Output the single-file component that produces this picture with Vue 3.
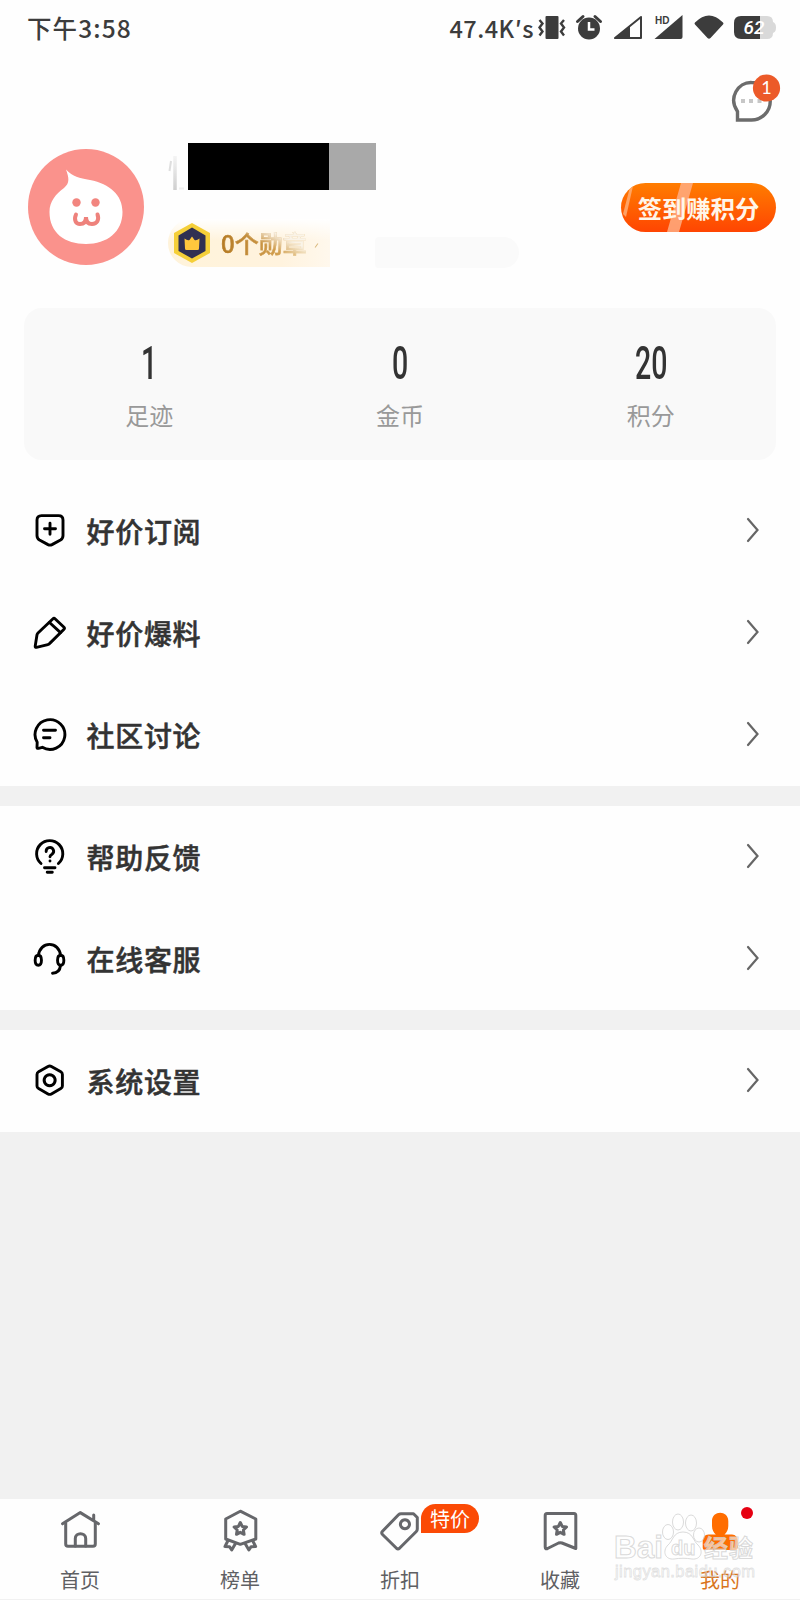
<template>
  <div class="page">
    <header class="top">
      <div class="status-bar">
        <span class="time">下午3:58</span>
        <div class="status-right">
          <span class="speed">47.4K′s</span>
          <svg width="242" height="28" viewBox="0 0 242 28" fill="#3c3c3c">
            <rect x="7.500" y="2" width="13" height="23" rx="1" />
            <path d="M1.500 6l3 3.500-3 4 3 4-3 4M26 6l-3 3.500 3 4-3 4 3 4" fill="none" stroke="#3c3c3c" stroke-width="2.400" />
            <circle cx="51" cy="14.500" r="11" />
            <path d="M39.500 7.500L45 2.500M62.500 7.500L57 2.500" stroke="#3c3c3c" stroke-width="3" stroke-linecap="round" />
            <path d="M51 8v7.500h5.500" fill="none" stroke="#fff" stroke-width="2.500" />
            <path d="M77 24L103 3V24Z" fill="none" stroke="#3c3c3c" stroke-width="2" stroke-linejoin="round" />
            <path d="M76 25L92 12V25Z" />
            <path d="M116.500 25L144.500 1V23q0 2-2 2Z" />
            <text x="117" y="9.500" class="hd">HD</text>
            <path d="M157 8.500q14-14 28 0q1 1 0 2L172.500 24q-1.500 1.500-3 0L157 10.500q-1-1 0-2Z" />
            <path d="M203 2h19v23h-19q-7 0-7-7V9q0-7 7-7Z" />
            <path d="M222 2h7q6 0 6 6q3 1 3 5.500t-3 5.500q0 6-6 6h-7Z" fill="#d9d9d9" />
            <text x="205.500" y="20" class="battery">62</text>
          </svg>
        </div>
      </div>

      <div class="message-row">
        <svg width="56" height="56" viewBox="0 0 56 56">
          <path d="M7.500 48V39.500C-2 26 8 10 21.500 10.500A18.700 18.700 0 0 1 21.500 48Z" fill="#fff" stroke="#6c6c6c" stroke-width="3.400" />
          <path d="M11 27h4v4h-4zM19 27h4v4h-4zM27.500 27h4v4h-4z" fill="#c7c7c7" />
          <circle cx="36.500" cy="16" r="13.600" fill="#ec5a29" />
          <text x="36.500" y="22" class="count">1</text>
        </svg>
      </div>

      <div class="profile">
        <svg class="avatar" width="116" height="116" viewBox="0 0 116 116">
          <circle cx="58" cy="58" r="58" fill="#fa928c" />
          <path d="M38 20.500C45 28 51 29 62 31C82 35 94.500 46 94.500 63C94.500 83 79 95 58 95C37 95 21.500 84 21.500 63C21.500 52 28 45 36 39C42 34 41 29 38 20.500Z" fill="#fff" />
          <circle cx="48.500" cy="53.500" r="4.200" fill="#f2857f" />
          <circle cx="67.500" cy="53.500" r="4.200" fill="#f2857f" />
          <path d="M48 65.500C45.500 71 48 75 52 75C56 75 58 73 58 68C58 73 60 75 64 75C69 75 71.500 71 69.500 65.500" fill="none" stroke="#ee827c" stroke-width="4" stroke-linecap="round" />
        </svg>
        <div class="profile-info">
          <div class="name">
            <svg width="20" height="48" viewBox="0 0 20 48">
              <path d="M3 18L1.500 28" stroke="#dedede" stroke-width="2" />
              <path d="M7 13V47" stroke="url(#strokeFade)" stroke-width="3.500" />
              <path d="M11 45.500h5" stroke="#efefef" stroke-width="2" />
              <defs>
                <linearGradient id="strokeFade" gradientUnits="userSpaceOnUse" x1="0" y1="13" x2="0" y2="47">
                  <stop offset="0" stop-color="#f4f4f4" />
                  <stop offset="1" stop-color="#cfcfcf" />
                </linearGradient>
              </defs>
            </svg>
            <span class="mask-dark"></span>
            <span class="mask-light"></span>
          </div>
          <div class="badges">
            <div class="medal">
              <svg width="38" height="42" viewBox="0 0 38 42">
                <path d="M19 1L37 11V31L19 41L1 31V11Z" fill="#f5cf38" />
                <path d="M19 5.500L32.500 13.500V29L19 36.500L5.500 29V13.500Z" fill="#303052" />
                <path d="M11.500 16.500Q14.500 19 16.500 18L19 14.500L21.500 18Q23.500 19 26.500 16.500L26 26.500Q26 28 24.500 28H13.500Q12 28 12 26.500Z" fill="#ffc83d" />
              </svg>
              <span class="medal-text">0个勋章</span>
              <span class="medal-arrow"></span>
            </div>
            <span class="level"></span>
          </div>
        </div>
        <button class="sign">
          <svg width="155" height="49" viewBox="0 0 155 49">
            <path d="M9 4L12 3L5 34L2 31Z" fill="#ffb27b" opacity=".8" />
            <path d="M60 0H72L58 49H46Z" fill="#ffad83" opacity=".85" />
          </svg>
          <span>签到赚积分</span>
        </button>
      </div>

      <div class="stats">
        <div v-for="item in stats" :key="item.label" class="stat">
          <span class="stat-value">{{ item.value }}</span>
          <span class="stat-label">{{ item.label }}</span>
        </div>
      </div>
    </header>

    <section v-for="(group, i) in menu" :key="i" class="group">
      <div v-for="row in group" :key="row.label" class="row">
        <svg class="row-icon" width="36" height="36" viewBox="0 0 36 36">
          <path v-for="d in row.paths" :key="d" :d="d" />
        </svg>
        <span class="row-label">{{ row.label }}</span>
        <svg class="chevron" width="14" height="26" viewBox="0 0 14 26">
          <path d="M2 2L11.500 13L2 24" />
        </svg>
      </div>
    </section>

    <nav class="tabs">
      <div v-for="tab in tabs" :key="tab.label" class="tab" :class="{ active: tab.active }">
        <div class="tab-icon">
          <svg width="44" height="46" viewBox="0 0 44 46">
            <path v-for="d in tab.paths" :key="d" :d="d" />
          </svg>
          <span v-if="tab.badge" class="tab-badge">{{ tab.badge }}</span>
          <span v-if="tab.active" class="dot"></span>
        </div>
        <span class="tab-label">{{ tab.label }}</span>
      </div>
    </nav>

    <svg class="watermark" width="160" height="80" viewBox="0 0 160 80">
      <g class="outline">
        <text x="14" y="48" class="bai" textLength="49" lengthAdjust="spacingAndGlyphs">Bai</text>
        <ellipse cx="68" cy="22" rx="5.500" ry="7.500" />
        <ellipse cx="78" cy="12" rx="5.500" ry="8" />
        <ellipse cx="91" cy="13" rx="5.500" ry="8" />
        <ellipse cx="99" cy="25" rx="5.500" ry="7" />
        <path d="M83 22C73 22 73 31 68 35C62 41 65 50 74 49C80 48 86 48 92 49C101 50 104 41 98 35C93 31 93 22 83 22Z" />
        <text x="71" y="45" class="du">du</text>
        <text x="104" y="47" class="jy" textLength="49">经验</text>
        <text x="15" y="67" class="url" textLength="140">jingyan.baidu.com</text>
      </g>
    </svg>
  </div>
</template>

<script setup>
const stats = [
  { value: 1, label: '足迹' },
  { value: 0, label: '金币' },
  { value: 20, label: '积分' },
];

const menu = [
  [
    {
      label: '好价订阅',
      paths: [
        'M9.500 3.600H26.500Q31 3.600 31 8V23.500Q31 26.500 28.500 28L20 32.600Q18 33.600 16 32.600L7.500 28Q5 26.500 5 23.500V8Q5 3.600 9.500 3.600Z',
        'M12.500 16.700H23.500M18 11.200V22.200',
      ],
    },
    {
      label: '好价爆料',
      paths: [
        'M21 4.800Q22 3.800 23 4.800L32 13.300Q33 14.300 32 15.300L17.500 29.600Q16.800 30.400 15.800 30.600L4.500 33.300Q3 33.500 3.200 32.100L5 20.800Q5.200 19.800 6 19Z',
        'M17.500 8.500L28.500 18.600',
      ],
    },
    {
      label: '社区讨论',
      paths: [
        'M5.200 26.200A14.900 14.900 0 1 1 10.300 31.300L6.500 32.300Q4.800 32.700 5 31.200Z',
        'M11.500 14.300H23.500M11.500 21.700H18',
      ],
    },
  ],
  [
    {
      label: '帮助反馈',
      paths: [
        'M9 25.500A13.100 13.100 0 1 1 26.400 25.500',
        'M12.500 29.700H23M15.200 34.300H20.300',
        'M14.200 13.500A3.700 3.700 0 1 1 20 16.200Q18 17.300 18 18.700M18 22.900V23',
      ],
    },
    {
      label: '在线客服',
      paths: [
        'M6.500 15.500C7 8.500 12 4.400 17.500 4.400S28 8.500 28.500 15.500',
        'M6.300 15.300C10.500 15.300 10.500 25.300 6.300 25.300S2.100 15.300 6.300 15.300Z',
        'M28.700 15.300C32.900 15.300 32.900 25.300 28.700 25.300S24.500 15.300 28.700 15.300Z',
        'M28.500 25.500C28 30.500 26 33 20.500 33.200',
      ],
    },
  ],
  [
    {
      label: '系统设置',
      paths: [
        'M16 4.500Q17.700 3.500 19.400 4.500L28.800 9.800Q30.400 10.700 30.400 12.500V23.900Q30.400 25.700 28.800 26.600L19.400 31.900Q17.700 32.900 16 31.900L6.600 26.600Q5 25.700 5 23.900V12.500Q5 10.700 6.600 9.800Z',
        'M17.700 12.700A5.500 5.500 0 1 1 17.600 12.700Z',
      ],
    },
  ],
];

const star = 'M22.300 14.500L24.200 18.400L28.500 19L25.400 22L26.100 26.300L22.300 24.300L18.500 26.300L19.200 22L16.100 19L20.400 18.400Z';

const tabs = [
  {
    label: '首页',
    paths: [
      'M4.500 15.800L22.300 4.600L40.500 15.800M35.700 7V12.500',
      'M7.700 15V36Q7.700 38.300 10 38.300H35Q37.300 38.300 37.300 36V15',
      'M17.300 38V30.500C17.300 24 27.700 24 27.700 30.500V38',
    ],
  },
  {
    label: '榜单',
    paths: [
      'M22.300 3.200L37.800 11V31L22.300 36.300L7.700 31V11Z',
      star,
      'M10 32.500L7 38.500L11.500 38.700L13.700 42L17.500 35.500M34.600 32.500L37.600 38.500L33.100 38.700L30.900 42L27.100 35.500',
    ],
  },
  {
    label: '折扣',
    badge: '特价',
    paths: [
      'M4.500 23.300L20.500 6.700Q21.500 5.700 23 5.700H35.500L39.300 9.500V21Q39.300 22.500 38.300 23.500L21.500 40.300Q20 41.500 18.500 40.300L4.500 26.500Q3 25 4.500 23.300Z',
      'M27 11.800A4.500 4.500 0 1 1 26.900 11.800Z',
    ],
  },
  {
    label: '收藏',
    paths: [
      'M9 5.500H36Q37.800 5.500 37.800 7.500V40.500L24 35Q22.300 34.300 20.600 35L9.500 40.500Q7.200 41.500 7.200 39V7.500Q7.200 5.500 9 5.500Z',
      star,
    ],
  },
  {
    label: '我的',
    active: true,
    paths: [
      'M14 13C14 2 30.300 2 30.300 13V18C30.300 22 28.500 24.500 26.500 26.500H34Q39.700 27 39.700 33V39.500Q39.700 42 37 42H7.500Q4.700 42 4.700 39.500V33Q4.700 27 10.500 26.500H17.800C15.800 24.500 14 22 14 18Z',
    ],
  },
];
</script>

<style>
body {
  margin: 0;
}
</style>

<style scoped>
.page {
  position: relative;
  display: flex;
  flex-direction: column;
  width: 800px;
  height: 1600px;
  overflow: hidden;
  background: #f1f1f1;
  font-family: "Noto Sans CJK SC", sans-serif;
  color: #333;
}

.top {
  box-sizing: border-box;
  height: 480px;
  background: #fefefe;
}

.status-bar {
  display: flex;
  justify-content: space-between;
  box-sizing: border-box;
  height: 56px;
  padding: 14px 20px 0 27px;
  line-height: 28px;
  color: #3c3c3c;
}
.status-right {
  display: flex;
  gap: 4px;
}
.status-right svg {
  overflow: visible;
}
.time {
  font-size: 24.5px;
  font-weight: 500;
  letter-spacing: 1.1px;
}
.speed {
  font-size: 23.5px;
  font-weight: 500;
  letter-spacing: .5px;
}
.hd {
  font: 700 10px/10px "Liberation Sans", sans-serif;
}
.battery {
  font: italic 500 19px Roboto, sans-serif;
  fill: #fff;
}

.message-row {
  display: flex;
  justify-content: flex-end;
  height: 71px;
  padding: 16px 14px 0 0;
  box-sizing: border-box;
}
.count {
  font: 18px Lato, sans-serif;
  fill: #fff;
  text-anchor: middle;
}

.profile {
  display: flex;
  height: 165px;
  padding: 16px 24px 0 28px;
  box-sizing: border-box;
}
.avatar {
  margin-top: 6px;
}
.profile-info {
  flex: 1;
  margin-left: 24px;
}
.name {
  display: flex;
  height: 47px;
}
.mask-dark {
  width: 141px;
  background: #000;
}
.mask-light {
  width: 47px;
  background: #a9a9a9;
}
.badges {
  display: flex;
  align-items: flex-start;
  margin-top: 29px;
}
.medal {
  display: flex;
  align-items: center;
  width: 162px;
  height: 48px;
  box-sizing: border-box;
  padding-left: 5px;
  border-radius: 24px 0 0 24px;
  background: linear-gradient(180deg, #fff 0, rgba(255, 255, 255, 0) 45%), linear-gradient(90deg, #fff3da, #fff3de 70%, #fff8ed);
}
.medal-text {
  margin-left: 10px;
  font-size: 24px;
  font-weight: 500;
  line-height: 34px;
  white-space: nowrap;
  color: transparent;
  -webkit-text-stroke: .6px transparent;
  background: linear-gradient(205deg, rgba(255, 255, 255, .85) 30%, transparent 52%), linear-gradient(90deg, #b57b24, #cf9b4b 60%, #dfb76d);
  background-clip: text;
}
.medal-arrow {
  width: 1px;
  height: 5px;
  margin: 4px 0 0 9px;
  background: #d9b77c;
  transform: rotate(35deg);
}
.level {
  width: 144px;
  height: 31px;
  margin: 18px 0 0 45px;
  border-radius: 4px 16px 16px 4px;
  background: #fafafa;
}

.sign {
  display: grid;
  width: 155px;
  height: 49px;
  margin-top: 40px;
  padding: 0;
  border: 0;
  border-radius: 25px;
  overflow: hidden;
  background: linear-gradient(180deg, #ff7d00, #ff4502);
  color: #fff6e9;
  font: 700 24.3px/49px "Noto Sans CJK SC", sans-serif;
}
.sign > * {
  grid-area: 1 / 1;
}

.stats {
  display: grid;
  grid-template-columns: repeat(3, 1fr);
  height: 152px;
  margin: 16px 24px 0;
  border-radius: 18px;
  background: #f9f9f9;
}
.stat {
  display: flex;
  flex-direction: column;
  align-items: center;
}
.stat-value {
  margin-top: 31px;
  font: 500 46px/48px Roboto, sans-serif;
  transform: scaleX(.62);
}
.stat-label {
  margin-top: 10px;
  font-size: 24px;
  line-height: 36px;
  color: #999;
}

.group {
  margin-bottom: 20px;
  background: #fefefe;
}
.row {
  display: flex;
  align-items: center;
  height: 102px;
  padding: 0 40px 0 32px;
}
.row-icon {
  margin-top: -2px;
  fill: none;
  stroke: #000;
  stroke-width: 2.9;
  stroke-linecap: round;
  stroke-linejoin: round;
}
.row-label {
  flex: 1;
  margin-left: 18.5px;
  font-size: 28px;
  font-weight: 500;
  letter-spacing: .7px;
  -webkit-text-stroke: .5px currentColor;
}
.chevron {
  margin-top: -2px;
  fill: none;
  stroke: #666;
  stroke-width: 2.2;
  stroke-linecap: round;
}

.tabs {
  display: grid;
  grid-template-columns: repeat(5, 1fr);
  box-sizing: border-box;
  height: 101px;
  margin-top: auto;
  border-bottom: 1px solid #f1f1f1;
  background: #fefefe;
}
.tab {
  display: flex;
  flex-direction: column;
  align-items: center;
  padding-top: 9px;
  color: #5f6063;
}
.tab-icon {
  position: relative;
  height: 46px;
}
.tab-icon svg {
  display: block;
  overflow: visible;
  fill: none;
  stroke: #66676b;
  stroke-width: 3;
  stroke-linejoin: round;
  stroke-linecap: round;
}
.tab-label {
  margin-top: 11px;
  font-size: 20px;
  line-height: 30px;
}
.tab.active {
  color: #d9741b;
}
.tab.active svg {
  fill: #ff6d00;
  stroke: none;
}
.tab-badge {
  position: absolute;
  left: 43px;
  top: -4px;
  width: 58px;
  height: 29px;
  border-radius: 15px 15px 15px 0;
  background: #fb4a05;
  color: #fff;
  font-size: 20px;
  line-height: 29px;
  text-align: center;
}
.dot {
  position: absolute;
  left: 43px;
  top: -1px;
  width: 12px;
  height: 12px;
  border-radius: 50%;
  background: #e60012;
}

.watermark {
  position: absolute;
  left: 600px;
  top: 1510px;
  pointer-events: none;
}
.outline {
  fill: rgba(255, 255, 255, .6);
  stroke: rgba(205, 205, 205, .75);
  stroke-width: 1;
}
.bai {
  font: 700 31px "Liberation Sans", sans-serif;
}
.du {
  font: 700 20px "Liberation Sans", sans-serif;
}
.jy {
  font: 700 24px "Noto Sans CJK SC", sans-serif;
}
.url {
  font: 16.5px "Liberation Sans", sans-serif;
  fill: rgba(255, 255, 255, .3);
  stroke: rgba(205, 205, 205, .6);
  stroke-width: .8;
}
</style>
